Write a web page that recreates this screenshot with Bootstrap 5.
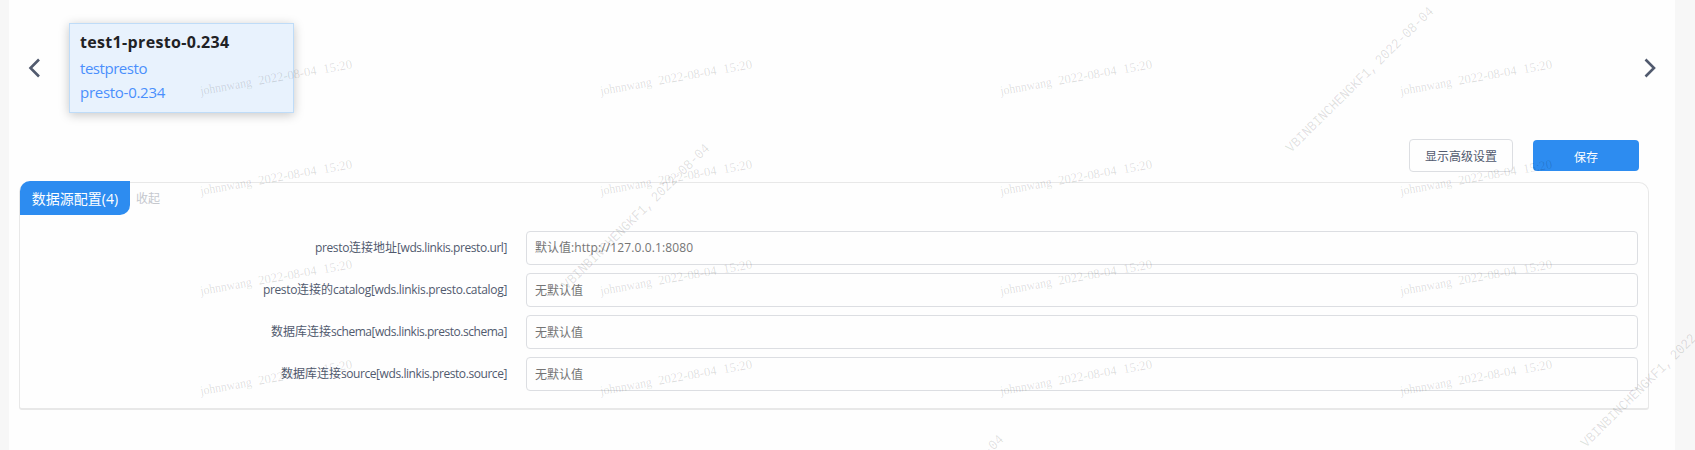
<!DOCTYPE html>
<html lang="zh-CN">
<head>
<meta charset="utf-8">
<title>数据源配置</title>
<link href="https://cdn.jsdelivr.net/npm/bootstrap@5.3.0/dist/css/bootstrap.min.css" rel="stylesheet">
<style>
body{background:#f7f7f7;font-family:"Open Sans","Noto Sans CJK SC",sans-serif;font-size:12px;color:#515a6e;overflow:hidden}
.page-wrap{height:450px;margin:0 20px 0 9px;background:#fefefe}
.carousel-bar{height:139px;padding:23px 19px 0 19px}
.arrow-btn{height:90px;width:12px}
.source-card{width:225px;height:90px;margin-left:29px;padding:6px 10px;background:#e8f2fd;border:1px solid #bfdcf8;box-shadow:0 2px 10px rgba(0,0,0,.22);color:#4a8ffc;font-size:15px;line-height:24px}
.source-card .src-title{font-size:16px;font-weight:700;color:#1f2225;line-height:24px;margin-bottom:2px}
.actions{height:43px;padding-right:36px;gap:20px}
.btn-plain,.btn-save{font-size:12px;padding:2px 0 0;border-radius:4px;line-height:1}
.btn-plain{width:104px;height:33px;border:1px solid #dcdee2;color:#515a6e}
.btn-save{width:106px;height:31px;margin-top:1px;padding-top:4px;background:#2d8cf0;color:#fff}
.config-box{margin:0 26px 0 10px;height:228px;border:1px solid #e8e8e8;border-bottom:2px solid #e8e8e8;border-radius:10px 10px 3px 3px}
.tab-head{height:34px;margin-top:-2px}
.tab-title{width:110px;height:34px;background:#2d8cf0;color:#fff;border-radius:10px 0 10px 0;font-size:14px}
.fold{color:#c5c8ce;margin-left:6px;padding-top:1px}
.form-area{padding:16px 10px 0 0;gap:8px}
.form-line{height:34px}
.line-label{width:506px;flex:none;padding-right:19px}
.line-input{height:34px;min-width:0;padding:0 8px;font-size:12px;border:1px solid #dcdee2;border-radius:4px;background:transparent;color:#757575;line-height:32px}
.line-input::placeholder{color:#757575}
.marks{position:absolute;left:0;top:0;pointer-events:none}
</style>
</head>
<body>
<main class="page-wrap">
  <div class="carousel-bar d-flex align-items-start">
    <svg class="arrow-btn" viewBox="0 0 12 90" fill="none" stroke="#515a6e" stroke-width="2.6"><path d="M11 36.500 2.500 45l8.500 8.500"/></svg>
    <div class="source-card">
      <div class="src-title"><span data-w="149.500">test1-presto-0.234</span></div>
      <div><span data-w="67">testpresto</span></div>
      <div><span data-w="85">presto-0.234</span></div>
    </div>
    <svg class="arrow-btn ms-auto" viewBox="0 0 12 90" fill="none" stroke="#515a6e" stroke-width="2.6"><path d="M1.500 36.500 10 45 1.500 53.500"/></svg>
  </div>
  <div class="actions d-flex justify-content-end align-items-start">
    <button class="btn btn-plain">显示高级设置</button>
    <button class="btn btn-save">保存</button>
  </div>
  <section class="config-box">
    <div class="tab-head d-flex align-items-center">
      <div class="tab-title d-flex align-items-center justify-content-center">数据源配置<span data-w="16.5">(4)</span></div>
      <span class="fold">收起</span>
    </div>
    <div class="form-area d-flex flex-column">
      <div class="form-line d-flex align-items-center">
        <label class="line-label text-end"><span data-w="34">presto</span>连接地址<span data-w="110">[wds.linkis.presto.url]</span></label>
        <div class="line-input flex-fill">默认值:<span data-w="119">http://127.0.0.1:8080</span></div>
      </div>
      <div class="form-line d-flex align-items-center">
        <label class="line-label text-end"><span data-w="34">presto</span>连接的<span data-w="174">catalog[wds.linkis.presto.catalog]</span></label>
        <input class="line-input flex-fill" placeholder="无默认值">
      </div>
      <div class="form-line d-flex align-items-center">
        <label class="line-label text-end">数据库连接<span data-w="176">schema[wds.linkis.presto.schema]</span></label>
        <input class="line-input flex-fill" placeholder="无默认值">
      </div>
      <div class="form-line d-flex align-items-center">
        <label class="line-label text-end">数据库连接<span data-w="166">source[wds.linkis.presto.source]</span></label>
        <input class="line-input flex-fill" placeholder="无默认值">
      </div>
    </div>
  </section>
</main>
<svg class="marks" id="marks" width="1695" height="450"></svg>
<script src="https://cdn.jsdelivr.net/npm/bootstrap@5.3.0/dist/js/bootstrap.bundle.min.js"></script>
<script>
document.querySelectorAll('[data-w]').forEach(function (s) {
  var w = s.getBoundingClientRect().width;
  s.style.letterSpacing = ((+s.dataset.w - w) / s.textContent.length) + 'px';
});
// Security watermarks tiled over the page.
var out = '';
function mark(x, y, angle, font, size, alpha, words) {
  out += '<g transform="translate(' + x + ' ' + y + ') rotate(' + angle + ')" font-family="' + font + '" font-size="' + size + '" fill="#000" fill-opacity="' + alpha + '">';
  words.forEach(function (w) {
    out += '<text x="' + w[1] + '" textLength="' + w[2] + '" lengthAdjust="spacingAndGlyphs">' + w[0] + '</text>';
  });
  out += '</g>';
}
for (var x = 201; x < 1695; x += 400)
  for (var y = 95; y < 450; y += 100)
    mark(x, y, -10, 'Liberation Serif, serif', 13, 0.135, [['johnnwang', 0, 52], ['2022-08-04', 59, 59], ['15:20', 125, 29]]);
[[1291, 153], [567, 290], [861, 581], [1586, 448]].forEach(function (p) {
  mark(p[0], p[1], -44.5, 'Liberation Mono, monospace', 14, 0.13, [['VBINBINCHENGKF1,', 0, 121], ['2022-08-04', 125, 76]]);
});
for (var a = -8; a < 12; a++)
  for (var b = -3; b < 5; b++) {
    var px = 387 + a * 100 + b * 252, py = 317 + a * 100 - b * 253;
    if (px > -170 && px < 1680 && py > 15 && py < 625)
      mark(px, py, -45, 'Liberation Sans, sans-serif', 17, 0.016, [['VBINBINCHENGKF1.', 0, 158], ['2022-08-04', 166, 101]]);
  }
document.getElementById('marks').innerHTML = out;
</script>
</body>
</html>
